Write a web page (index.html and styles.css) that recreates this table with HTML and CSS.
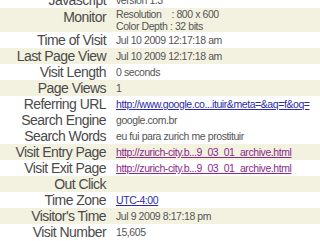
FILE: index.html
```html
<!DOCTYPE html>
<html>
<head>
<meta charset="utf-8">
<link rel="stylesheet" href="styles.css">
</head>
<body>
<div class="tbl">
  <div class="row"><div class="lbl">Javascript</div><div class="val">version 1.3</div></div>
  <div class="row alt tall"><div class="lbl">Monitor</div><div class="val"><div class="ln">Resolution&nbsp;&nbsp;&nbsp;&nbsp;: 800 x 600</div><div class="ln">Color Depth : 32 bits</div></div></div>
  <div class="row"><div class="lbl">Time of Visit</div><div class="val">Jul 10 2009 12:17:18 am</div></div>
  <div class="row alt"><div class="lbl">Last Page View</div><div class="val">Jul 10 2009 12:17:18 am</div></div>
  <div class="row"><div class="lbl">Visit Length</div><div class="val">0 seconds</div></div>
  <div class="row alt"><div class="lbl">Page Views</div><div class="val">1</div></div>
  <div class="row"><div class="lbl">Referring URL</div><div class="val"><a class="link" href="#">http://www.google.co...ituir&amp;meta=&amp;aq=f&amp;oq=</a></div></div>
  <div class="row"><div class="lbl">Search Engine</div><div class="val">google.com.br</div></div>
  <div class="row"><div class="lbl">Search Words</div><div class="val">eu fui para zurich me prostituir</div></div>
  <div class="row alt"><div class="lbl">Visit Entry Page</div><div class="val"><a class="link visited" href="#">http://zurich-city.b...9_03_01_archive.html</a></div></div>
  <div class="row"><div class="lbl">Visit Exit Page</div><div class="val"><a class="link visited" href="#">http://zurich-city.b...9_03_01_archive.html</a></div></div>
  <div class="row alt"><div class="lbl">Out Click</div><div class="val"></div></div>
  <div class="row"><div class="lbl">Time Zone</div><div class="val"><a class="link" href="#">UTC-4:00</a></div></div>
  <div class="row alt"><div class="lbl">Visitor's Time</div><div class="val">Jul 9 2009 8:17:18 pm</div></div>
  <div class="row"><div class="lbl">Visit Number</div><div class="val">15,605</div></div>
</div>
</body>
</html>
```

FILE: styles.css
```css
html, body {
  margin: 0;
  padding: 0;
  background: #ffffff;
  overflow: hidden;
}

.tbl {
  margin-top: -8px;
  font-family: "Liberation Sans", Arial, sans-serif;
}

.row {
  display: grid;
  grid-template-columns: 106px 1fr;
  height: 16px;
  align-items: center;
  background: #ffffff;
}

.row.alt {
  background: #f3f1e0;
}

.row.tall {
  height: 24px;
  align-items: start;
}

.lbl {
  text-align: right;
  font-size: 14px;
  letter-spacing: -0.55px;
  line-height: 16px;
  color: #4a4a4a;
  white-space: nowrap;
}

.row.tall .lbl {
  line-height: 18px;
}

.val {
  padding-left: 10px;
  font-size: 10.5px;
  letter-spacing: -0.42px;
  line-height: 16px;
  color: #555555;
  white-space: nowrap;
}

.val .ln {
  line-height: 12px;
}

.link {
  color: #2b2ba6;
  text-decoration: underline;
}

.link.visited {
  color: #8a2a8a;
}
```
